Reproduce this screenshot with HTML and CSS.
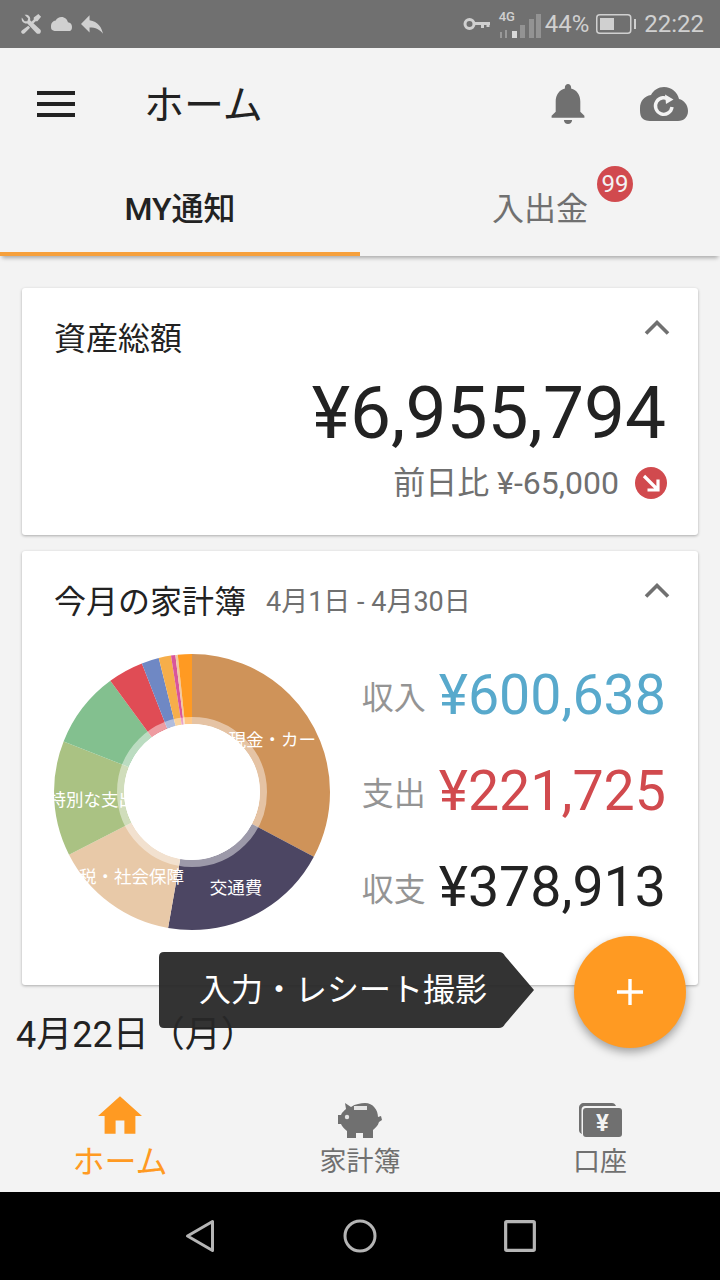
FILE: index.html
```html
<!DOCTYPE html>
<html lang="ja">
<head>
  <meta charset="UTF-8" />
  <meta name="viewport" content="width=device-width, initial-scale=1" />
  <title>ホーム</title>
  <link rel="stylesheet" href="styles.css">
</head>
<body>

  <div class="status-bar">
    <div class="status-left">
      <svg class="st-tools" viewBox="0 0 24 24" fill="#d0d0d0">
        <path d="M5 2 9 6 8 9 5 9 2 5C1 9 4 12 8 11.500L18 22C19 23 21 23 22 22 23 21 23 19 22 18L11 8C12 4 9 1 5 2Z" />
        <path d="M20 1 23 4 19 9 17 9 14 12 12 10 15 7 15 5ZM9 14 11 16 5 22C4 23 3 23 2 22 1 21 1 20 2 19Z" />
      </svg>
      <svg class="st-cloud" viewBox="0 0 24 16" fill="#d0d0d0">
        <path d="M19.350 6.040C18.670 2.590 15.640 0 12 0 9.110 0 6.600 1.640 5.350 4.040 2.340 4.360 0 6.910 0 10 0 13.310 0 16 6 16H19C21.760 16 24 16 24 11 24 8.360 21.950 6.220 19.350 6.040Z" />
      </svg>
      <svg class="st-reply" viewBox="3 5 18 15" fill="#d0d0d0">
        <path d="M10 9V5L3 12 10 19V14.900C15 14.900 18.500 16.500 21 20 20 15 17 10 10 9Z" />
      </svg>
    </div>
    <div class="status-right">
      <svg class="st-key" viewBox="0 0 28 14" fill="none" stroke="#d0d0d0">
        <circle cx="6.500" cy="7" r="4.500" stroke-width="3" />
        <path d="M11 6.500H27M19.500 6.500V11M25 6.500V10" stroke-width="3" />
      </svg>
      <div class="st-signal">
        <span class="st-4g">4G</span>
        <svg viewBox="0 0 42 26" width="42" height="26">
          <rect x="1" y="20" width="2" height="6" fill="#999" />
          <rect x="6" y="18" width="2" height="8" fill="#999" />
          <rect x="13" y="19" width="5" height="7" fill="#d8d8d8" />
          <rect x="21" y="13" width="5" height="13" fill="#939393" />
          <rect x="30" y="7" width="5" height="19" fill="#939393" />
          <rect x="37" y="2" width="5" height="24" fill="#939393" />
        </svg>
      </div>
      <span class="st-text">44%</span>
      <svg class="st-battery" viewBox="0 0 40 20" fill="none">
        <rect x="0.750" y="0.750" width="34" height="18.500" rx="3" stroke="#d0d0d0" stroke-width="1.500" />
        <rect x="4" y="4" width="14" height="12" fill="#d0d0d0" />
        <rect x="38" y="5" width="2" height="10" fill="#d0d0d0" />
      </svg>
      <span class="st-text st-time">22:22</span>
    </div>
  </div>

  <header class="app-header">
    <div class="hamburger"><span></span><span></span><span></span></div>
    <h1 class="app-title">ホーム</h1>
    <svg class="bell" viewBox="4 2.500 16 19.500" fill="#707070">
      <path d="M12 22C13.100 22 14 21.100 14 20H10C10 21.100 10.890 22 12 22ZM18 16V11C18 7.930 16.360 5.360 13.500 4.680V4C13.500 3.170 12.830 2.500 12 2.500S10.500 3.170 10.500 4V4.680C7.630 5.360 6 7.920 6 11V16L4 18V19H20V18Z" />
    </svg>
    <svg class="cloud-sync" viewBox="0 0 48 34">
      <path fill="#707070" d="M39 12C37.500 5 31.500 0 24 0 18.500 0 13.500 3 11 8 4.500 9 0 14 0 21 0 28 0 34 12 34H38C44 34 48 30 48 24 48 18 44 13 39 12Z" />
      <path fill="none" stroke="#f3f3f3" stroke-width="3.400" d="M29.500 13A8.300 8.300 0 1 0 32 20" />
      <path fill="#f3f3f3" d="M25 7.500 33.500 12.500 26 17Z" />
    </svg>
  </header>

  <nav class="tabs">
    <div class="tab tab-active">MY通知</div>
    <div class="tab"><span class="tab-label">入出金<span class="tab-badge">99</span></span></div>
  </nav>

  <main class="content">
    <section class="card card-assets">
      <div class="card-head">
        <h2 class="card-title">資産総額</h2>
        <svg class="chevron" viewBox="0 0 26 16" fill="none" stroke="#707070" stroke-width="3.600"><path d="M2 14.500 13 3.500 24 14.500" /></svg>
      </div>
      <div class="total">¥6,955,794</div>
      <div class="delta">
        <span>前日比 ¥-65,000</span>
        <svg class="delta-icon" viewBox="0 0 32 32">
          <circle cx="16" cy="16" r="16" fill="#d14a4e" />
          <path d="M9 9 22 22M23 12.500V23H12.500" fill="none" stroke="#fff" stroke-width="3.200" />
        </svg>
      </div>
    </section>

    <section class="card card-budget">
      <div class="card-head">
        <h2 class="card-title">今月の家計簿<span class="period">4月1日 - 4月30日</span></h2>
        <svg class="chevron" viewBox="0 0 26 16" fill="none" stroke="#707070" stroke-width="3.600"><path d="M2 14.500 13 3.500 24 14.500" /></svg>
      </div>
      <div class="budget-body">
        <svg class="donut" viewBox="0 0 276 276" width="276" height="276">
          <defs>
            <clipPath id="tax-clip"><rect x="20" y="200" width="120" height="40" /></clipPath>
          </defs>
          <g fill="none" stroke-width="70" transform="rotate(-90 138 138)">
            <circle cx="138" cy="138" r="103" pathLength="360" stroke="#cf9359" stroke-dasharray="118 360" />
            <circle cx="138" cy="138" r="103" pathLength="360" stroke="#4c4663" stroke-dasharray="72 360" stroke-dashoffset="-118" />
            <circle cx="138" cy="138" r="103" pathLength="360" stroke="#e8c9a8" stroke-dasharray="53 360" stroke-dashoffset="-190" />
            <circle cx="138" cy="138" r="103" pathLength="360" stroke="#aac283" stroke-dasharray="48.500 360" stroke-dashoffset="-243" />
            <circle cx="138" cy="138" r="103" pathLength="360" stroke="#83c08f" stroke-dasharray="32.200 360" stroke-dashoffset="-291.500" />
            <circle cx="138" cy="138" r="103" pathLength="360" stroke="#e04c55" stroke-dasharray="15 360" stroke-dashoffset="-323.700" />
            <circle cx="138" cy="138" r="103" pathLength="360" stroke="#6f88c4" stroke-dasharray="7.300 360" stroke-dashoffset="-338.700" />
            <circle cx="138" cy="138" r="103" pathLength="360" stroke="#f6ae4a" stroke-dasharray="5.200 360" stroke-dashoffset="-346" />
            <circle cx="138" cy="138" r="103" pathLength="360" stroke="#d9559b" stroke-dasharray="1.800 360" stroke-dashoffset="-351.200" />
            <circle cx="138" cy="138" r="103" pathLength="360" stroke="#f0c8a0" stroke-dasharray="1 360" stroke-dashoffset="-353" />
            <circle cx="138" cy="138" r="103" pathLength="360" stroke="#ff9a22" stroke-dasharray="6 360" stroke-dashoffset="-354" />
          </g>
          <g class="donut-labels" fill="#fff">
            <text x="262" y="92" text-anchor="end">現金・カー</text>
            <text x="-5.500" y="152">特別な支出</text>
            <text x="130" y="229" text-anchor="end" clip-path="url(#tax-clip)">税・社会保障</text>
            <text x="182" y="240" text-anchor="middle">交通費</text>
          </g>
          <circle cx="138" cy="138" r="71.500" fill="none" stroke="#fff" stroke-width="7" opacity="0.45" />
          <circle cx="138" cy="138" r="68" fill="#fff" />
        </svg>
        <div class="stats">
          <div class="stat"><span class="stat-label">収入</span><span class="stat-value income">¥600,638</span></div>
          <div class="stat"><span class="stat-label">支出</span><span class="stat-value expense">¥221,725</span></div>
          <div class="stat"><span class="stat-label">収支</span><span class="stat-value">¥378,913</span></div>
        </div>
      </div>
    </section>

    <div class="date-heading">4月22日（月）</div>
  </main>

  <div class="hint">入力・レシート撮影</div>
  <button class="fab" aria-label="追加">
    <svg viewBox="0 0 30 30" width="30" height="30"><path d="M15 2V28M2 15H28" stroke="#fff" stroke-width="3.400" /></svg>
  </button>

  <nav class="bottom-nav">
    <div class="nav-item nav-active">
      <svg class="nav-home" viewBox="2 3 20 17" width="44" height="38" fill="#ff9a22"><path d="M10 20V14H14V20H19V12H22L12 3 2 12H5V20Z" /></svg>
      <span>ホーム</span>
    </div>
    <div class="nav-item">
      <svg viewBox="0 -4 46 42" width="46" height="42" fill="#707070">
        <path d="M8 3 14 7C18 4 24 3 28 3 36 3 41 10 41 17L44 16 45 20 42 22C41 26 38 28 36 30V38H26V33H19V38H10V31C7 29 5 26 4 24H1V15H4C5 12 7 11 9 9Z" />
        <rect x="17" y="6" width="13" height="4" fill="#e4e4e4" />
        <circle cx="10" cy="17" r="2.200" fill="#e4e4e4" />
      </svg>
      <span>家計簿</span>
    </div>
    <div class="nav-item">
      <svg viewBox="0 -6 46 42" width="46" height="42" fill="#707070">
        <path d="M5 32C3 31 2 30 2 28V6C2 3 4 1 7 1H35C37 1 38 2 39 4H8C6 4 4.500 5.500 4.500 8V29C4.500 30 4.500 31 5 32Z" />
        <rect x="6" y="6" width="39" height="29" rx="3" />
        <text class="yen" x="25.500" y="29" text-anchor="middle" fill="#f3f3f3">¥</text>
      </svg>
      <span>口座</span>
    </div>
  </nav>

  <!-- Android buttons -->
  <div class="system-bar">
    <svg viewBox="0 0 30 34" fill="none" stroke="#b5b5b5" stroke-width="3"><path d="M27.500 2.500V31.500L2.500 17Z" stroke-linejoin="round" /></svg>
    <svg viewBox="0 0 34 34" fill="none" stroke="#b5b5b5" stroke-width="3"><circle cx="17" cy="17" r="15" /></svg>
    <svg viewBox="0 0 32 32" fill="none" stroke="#b5b5b5" stroke-width="3"><rect x="2.500" y="2.500" width="27" height="27" rx="1" /></svg>
  </div>

</body>
</html>
```

FILE: styles.css
```css
* {
  box-sizing: border-box;
}

body {
  position: relative;
  display: flex;
  flex-direction: column;
  width: 720px;
  height: 1280px;
  margin: 0;
  overflow: hidden;
  background: #f3f3f3;
  color: #222;
  font-family: 'Roboto', 'Noto Sans CJK JP', sans-serif;
}

/* Status bar */
.status-bar {
  display: flex;
  align-items: center;
  justify-content: space-between;
  height: 48px;
  padding: 0 16px 0 20px;
  background: #707070;
  color: #d0d0d0;
}

.status-left,
.status-right {
  display: flex;
  align-items: center;
}

.status-left {
  gap: 8px;
}

.st-tools {
  width: 22px;
  height: 22px;
}

.st-cloud {
  width: 23px;
  height: 14px;
  margin-top: -1px;
}

.st-reply {
  width: 22px;
  height: 19px;
}

.st-key {
  width: 28px;
  height: 14px;
  margin-right: 8px;
}

.st-signal {
  position: relative;
  width: 42px;
  height: 26px;
  margin-right: 4px;
  margin-top: 2px;
}

.st-signal svg {
  display: block;
}

.st-4g {
  position: absolute;
  top: -2px;
  left: 0;
  font-size: 13px;
  font-weight: 500;
  line-height: 14px;
}

.st-text {
  font-size: 24px;
  line-height: 28px;
}

.st-battery {
  width: 40px;
  height: 20px;
  margin: 0 8px 0 7px;
}

/* Title bar */
.app-header {
  display: flex;
  align-items: center;
  height: 112px;
  padding: 0 32px 0 37px;
}

.hamburger {
  display: flex;
  flex-direction: column;
  gap: 7px;
  width: 38px;
}

.hamburger span {
  height: 4px;
  background: #222;
}

.app-title {
  flex: 1;
  margin: 4px 0 0 69px;
  font-size: 40px;
  font-weight: 400;
  line-height: 50px;
}

.bell {
  width: 34px;
  height: 40px;
  margin-right: 55px;
}

.cloud-sync {
  width: 48px;
  height: 34px;
}

/* Tabs */
.tabs {
  display: flex;
  height: 96px;
  box-shadow: 0 4px 4px -2px rgba(0, 0, 0, 0.3);
}

.tab {
  display: flex;
  flex: 1;
  align-items: center;
  justify-content: center;
  padding-bottom: 4px;
  color: #707070;
  font-size: 32px;
}

.tab-active {
  border-bottom: 4px solid #f6a03c;
  padding-bottom: 0;
  color: #222;
  font-weight: 500;
}

.tab-label {
  position: relative;
}

.tab-badge {
  position: absolute;
  top: -17px;
  right: -45px;
  width: 36px;
  height: 36px;
  border-radius: 50%;
  background: #d14a4e;
  color: #f3f3f3;
  font-size: 24px;
  line-height: 36px;
  text-align: center;
}

/* Cards */
.content {
  flex: 1;
  padding: 32px 22px 0;
}

.card {
  position: relative;
  border-radius: 3px;
  background: #fff;
  box-shadow: 0 1px 3px rgba(0, 0, 0, 0.3);
}

.card-assets {
  height: 247px;
  padding: 28px 32px 0;
}

.card-budget {
  height: 434px;
  margin-top: 16px;
  padding: 28px 32px 0;
}

.card-head {
  display: flex;
  align-items: flex-start;
  justify-content: space-between;
}

.card-title {
  margin: 0;
  font-size: 32px;
  font-weight: 400;
  line-height: 46px;
}

.period {
  margin-left: 20px;
  color: #707070;
  font-size: 27px;
  vertical-align: 2px;
}

.chevron {
  width: 26px;
  height: 16px;
  margin: 3px -4px 0 0;
}

.total {
  margin-top: 11px;
  font-size: 73px;
  line-height: 80px;
  text-align: right;
}

.delta {
  display: flex;
  align-items: center;
  justify-content: flex-end;
  gap: 16px;
  margin-top: 7px;
  color: #707070;
  font-size: 32px;
  line-height: 46px;
}

.delta-icon {
  width: 32px;
  height: 32px;
  margin-right: -1px;
}

.budget-body {
  display: flex;
  justify-content: space-between;
  margin-top: 29px;
}

.donut {
  display: block;
  flex: none;
}

.donut-labels text {
  font-size: 17.500px;
}

.stats {
  display: flex;
  flex-direction: column;
  gap: 32px;
  padding-top: 9px;
}

.stat {
  display: flex;
  align-items: center;
  justify-content: flex-end;
  gap: 13px;
  height: 64px;
}

.stat-label {
  color: #949494;
  font-size: 32px;
}

.stat-value {
  font-size: 55.500px;
}

.income {
  color: #58a9cc;
}

.expense {
  color: #d14a4e;
}

.date-heading {
  margin: 25px 0 0 -6px;
  font-size: 36px;
  line-height: 50px;
}

/* Hint and add button lie over the content */
.hint {
  position: absolute;
  top: 952px;
  left: 159px;
  width: 375px;
  height: 76px;
  padding-left: 40px;
  background: rgba(40, 40, 40, 0.95);
  clip-path: path('M5 0H340Q344 0 346 4L375 38 346 72Q344 76 340 76H5Q0 76 0 71V5Q0 0 5 0Z');
  color: #fff;
  font-size: 32px;
  line-height: 76px;
}

.fab {
  position: absolute;
  top: 936px;
  left: 574px;
  display: flex;
  align-items: center;
  justify-content: center;
  width: 112px;
  height: 112px;
  padding: 0;
  border: none;
  border-radius: 50%;
  background: #ff9a22;
  box-shadow: 0 4px 10px rgba(0, 0, 0, 0.35);
}

/* Bottom navigation */
.bottom-nav {
  display: flex;
  height: 120px;
  padding-top: 24px;
}

.nav-item {
  display: flex;
  flex: 1;
  flex-direction: column;
  align-items: center;
  color: #707070;
  font-size: 27px;
  line-height: 48px;
}

.nav-active {
  color: #ff9a22;
  font-size: 32px;
}

.nav-home {
  margin-bottom: 4px;
}

.yen {
  font-size: 24px;
  font-weight: 700;
}

.system-bar {
  display: flex;
  align-items: center;
  justify-content: center;
  gap: 126px;
  height: 88px;
  background: #000;
}

.system-bar svg {
  width: 34px;
  height: 34px;
}
```
